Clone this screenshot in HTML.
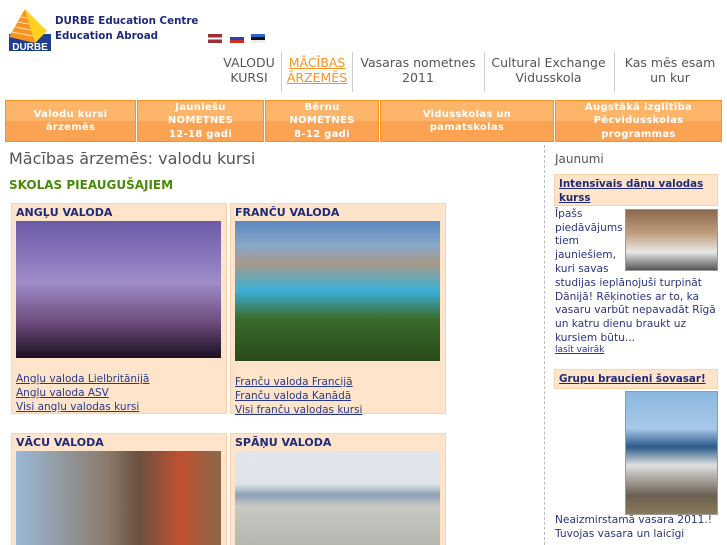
<!DOCTYPE html>
<html><head><meta charset="utf-8"><style>
*{margin:0;padding:0;box-sizing:border-box}
html,body{width:727px;height:545px;overflow:hidden}
body{background:#fff;font-family:"DejaVu Sans","Liberation Sans",sans-serif;position:relative}
.a{position:absolute}
.hd{color:#1f2a7a;font-weight:bold;font-size:10.3px;line-height:15px;left:55px;top:14px}
.nav{top:55px;font-size:12.5px;color:#555;text-align:center;line-height:15px}
.sep{top:52px;width:1px;height:40px;background:#ccc}
.ob{top:100px;height:42px;background:linear-gradient(#fdb56a 50%,#fba352 50%);border:1px solid #f7931e;color:#fff;font-weight:bold;font-size:10px;text-align:center;line-height:13.5px;display:flex;align-items:center;justify-content:center;letter-spacing:.3px}
.box{background:#fde4cb;border:1px solid #fcd3a8;width:216px}
.box h3{font-size:11px;color:#1f2a7a;margin:2px 0 0 4px;line-height:14px}
.box a{display:block;font-size:10.5px;color:#2a3a8a;line-height:14px;margin-left:4px}
.sb{font-size:10.6px;color:#2a3580;line-height:13.7px}
.st{font-size:10.3px;font-weight:bold;color:#1f2a7a;line-height:14px;text-decoration:underline;background:#fde4cb;border:1px solid #fcd3a8;padding:2px 4px;white-space:nowrap}
</style></head><body>
<svg class="a" style="left:9px;top:9px" width="42" height="42" viewBox="0 0 42 42">
<rect x="0" y="25" width="42" height="17" fill="#1e3f8f"/>
<polygon points="16,0 0,28 26,34" fill="#f7931e"/>
<polygon points="16,0 26,34 38,22" fill="#ffd21f"/>
<g stroke="#fde0b0" stroke-width="1"><line x1="12" y1="8" x2="18" y2="9"/><line x1="9" y1="13" x2="20" y2="15"/><line x1="6" y1="18" x2="22" y2="21"/><line x1="3" y1="23" x2="24" y2="27"/></g>
<text x="21" y="41" fill="#fff" font-size="10" font-weight="bold" text-anchor="middle" font-family="Liberation Sans">DURBE</text>
</svg>
<div class="a hd">DURBE Education Centre<br>Education Abroad</div>
<div class="a" style="left:208px;top:34px;width:14px;height:9px;background:linear-gradient(#9e3039 40%,#fff 40%,#fff 60%,#9e3039 60%)"></div>
<div class="a" style="left:230px;top:34px;width:14px;height:9px;background:linear-gradient(#fff 33%,#2a40c0 33%,#2a40c0 66%,#d52b1e 66%)"></div>
<div class="a" style="left:251px;top:34px;width:14px;height:9px;background:linear-gradient(#2a6ad0 33%,#111 33%,#111 66%,#eee 66%)"></div>
<div class="a nav" style="left:218px;width:62px">VALODU<br>KURSI</div>
<div class="a sep" style="left:281px"></div>
<div class="a nav" style="left:283px;width:68px;color:#f7931e;text-decoration:underline">MĀCĪBAS<br>ĀRZEMĒS</div>
<div class="a sep" style="left:352px"></div>
<div class="a nav" style="left:353px;width:130px">Vasaras nometnes<br>2011</div>
<div class="a sep" style="left:484px"></div>
<div class="a nav" style="left:485px;width:127px">Cultural Exchange<br>Vidusskola</div>
<div class="a sep" style="left:614px"></div>
<div class="a nav" style="left:615px;width:110px">Kas mēs esam<br>un kur</div>
<div class="a ob" style="left:5px;width:131px">Valodu kursi<br>ārzemēs</div>
<div class="a ob" style="left:137px;width:127px">Jauniešu<br>NOMETNES<br>12-18 gadi</div>
<div class="a ob" style="left:265px;width:114px">Bērnu<br>NOMETNES<br>8-12 gadi</div>
<div class="a ob" style="left:380px;width:174px">Vidusskolas un<br>pamatskolas</div>
<div class="a ob" style="left:555px;width:167px">Augstākā izglītība<br>Pēcvidusskolas<br>programmas</div>
<div class="a" style="left:9px;top:149px;font-size:16px;color:#555">Mācības ārzemēs: valodu kursi</div>
<div class="a" style="left:9px;top:178px;font-size:12px;color:#4a8a0a;font-weight:bold">SKOLAS PIEAUGUŠAJIEM</div>
<div class="a box" style="left:11px;top:203px;height:211px"><h3>ANGĻU VALODA</h3>
<div style="margin:1px 0 0 4px;width:205px;height:137px;background:linear-gradient(#6a5aa8,#a08cc8 45%,#6a4a7a 75%,#1a1020)"></div>
<div style="height:14px"></div><a><u>Angļu valoda Lielbritānijā</u></a><a><u>Angļu valoda ASV</u></a><a><u>Visi angļu valodas kursi</u></a></div>
<div class="a box" style="left:230px;top:203px;height:211px"><h3>FRANČU VALODA</h3>
<div style="margin:1px 0 0 4px;width:205px;height:140px;background:linear-gradient(#5a88c0 0,#8aa8c8 18%,#a89a88 30%,#3ab0d8 50%,#3a6a2a 70%,#2a4a1a)"></div>
<div style="height:14px"></div><a><u>Franču valoda Francijā</u></a><a><u>Franču valoda Kanādā</u></a><a><u>Visi franču valodas kursi</u></a></div>
<div class="a box" style="left:11px;top:433px;height:120px"><h3>VĀCU VALODA</h3>
<div style="margin:1px 0 0 4px;width:205px;height:110px;background:linear-gradient(90deg,#9ab8d8,#8a7a6a 45%,#6a5040 60%,#c05030 80%,#8a6a4a)"></div></div>
<div class="a box" style="left:230px;top:433px;height:120px"><h3>SPĀŅU VALODA</h3>
<div style="margin:1px 0 0 4px;width:205px;height:110px;background:linear-gradient(#e0e6ea 0,#dde3e8 30%,#8aa0b8 40%,#c8c8c4 50%,#b0b0a8)"></div></div>
<div class="a" style="left:544px;top:145px;height:400px;border-left:1px dashed #bbb"></div>
<div class="a" style="left:555px;top:152px;font-size:12px;color:#555">Jaunumi</div>
<div class="a st" style="left:554px;top:174px;width:164px;height:32px;white-space:normal">Intensīvais dāņu valodas kurss</div>
<div class="a" style="left:625px;top:209px;width:93px;height:62px;border:1px solid #999;background:linear-gradient(#8a6a4a,#c0a080 40%,#e8e8e8 70%,#555)"></div>
<div class="a sb" style="left:555px;top:208px;width:70px">Īpašs<br>piedāvājums<br>tiem<br>jauniešiem,<br>kuri savas</div>
<div class="a sb" style="left:555px;top:277px;width:172px">studijas ieplānojuši turpināt<br>Dānijā! Rēķinoties ar to, ka<br>vasaru varbūt nepavadāt Rīgā<br>un katru dienu braukt uz<br>kursiem būtu...</div>
<div class="a" style="left:555px;top:345px;font-size:9px;color:#2a3580;text-decoration:underline">lasīt vairāk</div>
<div class="a st" style="left:554px;top:369px;width:164px;height:20px">Grupu braucieni šovasar!</div>
<div class="a" style="left:625px;top:391px;width:93px;height:124px;border:1px solid #999;background:linear-gradient(#8ab8e0,#a8c8e8 30%,#2a5a8a 45%,#e0e0e0 60%,#6a6050 85%,#8a7a5a)"></div>
<div class="a sb" style="left:555px;top:514px;width:172px">Neaizmirstamā vasara 2011.!<br>Tuvojas vasara un laicīgi</div>
</body></html>
